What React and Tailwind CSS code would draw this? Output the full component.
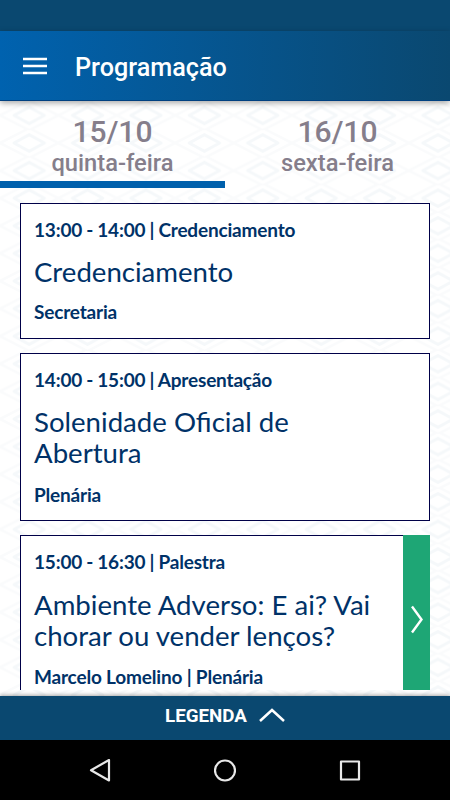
import clsx from 'clsx';

const days = [
  { date: '15/10', weekday: 'quinta-feira' },
  { date: '16/10', weekday: 'sexta-feira' },
];

const sessions = [
  { time: '13:00 - 14:00', type: 'Credenciamento', title: 'Credenciamento', place: 'Secretaria' },
  { time: '14:00 - 15:00', type: 'Apresentação', title: 'Solenidade Oficial de Abertura', place: 'Plenária', tall: true },
  {
    time: '15:00 - 16:30',
    type: 'Palestra',
    title: 'Ambiente Adverso: E ai? Vai chorar ou vender lenços?',
    place: 'Marcelo Lomelino | Plenária',
    tall: true,
    link: true,
  },
];

// Woven diamond background
const Pattern = () => (
  <svg className="absolute inset-0 w-full h-full" aria-hidden="true">
    <defs>
      <pattern id="weave" width="58.4" height="27.6" patternUnits="userSpaceOnUse" x="0" y="28.2">
        <g fill="none" strokeLinejoin="round">
          <path d="M14 13.8 L29.2 5.5 L44.4 13.8 L29.2 22.1 Z" stroke="#f5f8fa" strokeWidth="3" />
          <path d="M0 13.8 L29.2 -1 L58.4 13.8 L29.2 28.6 Z" stroke="#fafbfc" strokeWidth="2.5" />
        </g>
      </pattern>
    </defs>
    <rect width="100%" height="100%" fill="url(#weave)" />
  </svg>
);

const SessionCard = ({ session }) => (
  <article className="flex shrink-0 bg-white border border-[#000048] text-[#003268] font-['Lato',sans-serif]">
    <div className={clsx('flex-1 pl-[13px] pt-[14px] pb-[13.5px]', session.link ? 'pr-5' : 'pr-12')}>
      <p className="text-[19px] leading-6 font-bold tracking-[-0.18px] [word-spacing:-0.3px]">{session.time} | {session.type}</p>
      <h2 className={clsx('text-[27.6px] leading-[31px]', session.tall ? 'mt-[14.5px] mb-[14.5px]' : 'mt-[13.5px] mb-[13.5px]')}>{session.title}</h2>
      <p className="text-[19px] leading-6 font-bold tracking-[-0.18px]">{session.place}</p>
    </div>
    {session.link && (
      <div className="w-[27px] -my-px -mr-px bg-[#1ea675] flex justify-center items-center">
        <svg className="w-3 h-[29px]" viewBox="0 0 12 29" fill="none" stroke="white" strokeWidth="2.4">
          <path d="M1 1.5 L10.5 14.5 L1 27.5" />
        </svg>
      </div>
    )}
  </article>
);

const App = () => {
  const activeDay = 0;

  return (
    <div className="w-[450px] h-[800px] flex flex-col overflow-hidden bg-white font-['Roboto',sans-serif]">
      <div className="h-[31px] shrink-0 bg-[#0a4870]" />
      <header className="h-[70px] shrink-0 flex items-center relative z-10 bg-linear-to-r from-[#0062af] to-[#0a4870] border-b border-[#004080] shadow-[0_2px_6px_rgba(0,0,0,0.35)] text-white">
        <svg className="w-6 h-[18px] ml-[23px]" viewBox="0 0 24 18" fill="none" stroke="white" strokeWidth="2.5">
          <path d="M0 2 H24 M0 9 H24 M0 16 H24" />
        </svg>
        <h1 className="ml-7 mt-1 text-[25.2px] font-medium">Programação</h1>
      </header>

      <main className="flex-1 min-h-0 flex flex-col relative">
        <Pattern />
        <nav className="grid grid-cols-2 shrink-0 h-[87px] relative text-[#857e8b]">
          {days.map((day, i) => (
            <button
              key={day.date}
              className={clsx('flex flex-col items-center pt-[15px] font-medium border-b-[7px]', i === activeDay ? 'border-[#0060ac]' : 'border-transparent')}
            >
              <span className="text-[30px] leading-8">{day.date}</span>
              <span className="text-[23.7px] leading-[31px]">{day.weekday}</span>
            </button>
          ))}
        </nav>

        <section className="flex-1 min-h-0 mb-[6px] pt-[15px] px-5 flex flex-col gap-[14px] overflow-hidden relative">
          {sessions.map((session) => (
            <SessionCard key={session.time} session={session} />
          ))}
        </section>
      </main>

      <button className="h-11 shrink-0 relative bg-[#0a4870] text-white shadow-[0_-1px_4px_rgba(0,0,0,0.35)] flex justify-center items-center gap-3 pb-[3px]">
        <span className="text-[18.8px] font-bold">LEGENDA</span>
        <svg className="w-[26px] h-[14px] mb-[3px]" viewBox="0 0 26 14" fill="none" stroke="white" strokeWidth="2.5">
          <path d="M1 13 L13 2 L25 13" />
        </svg>
      </button>

      <footer className="h-[60px] shrink-0 bg-black grid grid-cols-3 items-center px-[37px]">
        {['M20 1 V21.5 L2 11.2 Z', 'M21 11.5 A10 10 0 1 1 1 11.5 A10 10 0 1 1 21 11.5 Z', 'M2 2.5 H20 V20.5 H2 Z'].map((d) => (
          <svg key={d} className="w-[22px] h-[23px] justify-self-center" viewBox="0 0 22 23" fill="none" stroke="#e8e8e8" strokeWidth="2.2">
            <path d={d} strokeLinejoin="round" />
          </svg>
        ))}
      </footer>
    </div>
  );
};

export default App;
